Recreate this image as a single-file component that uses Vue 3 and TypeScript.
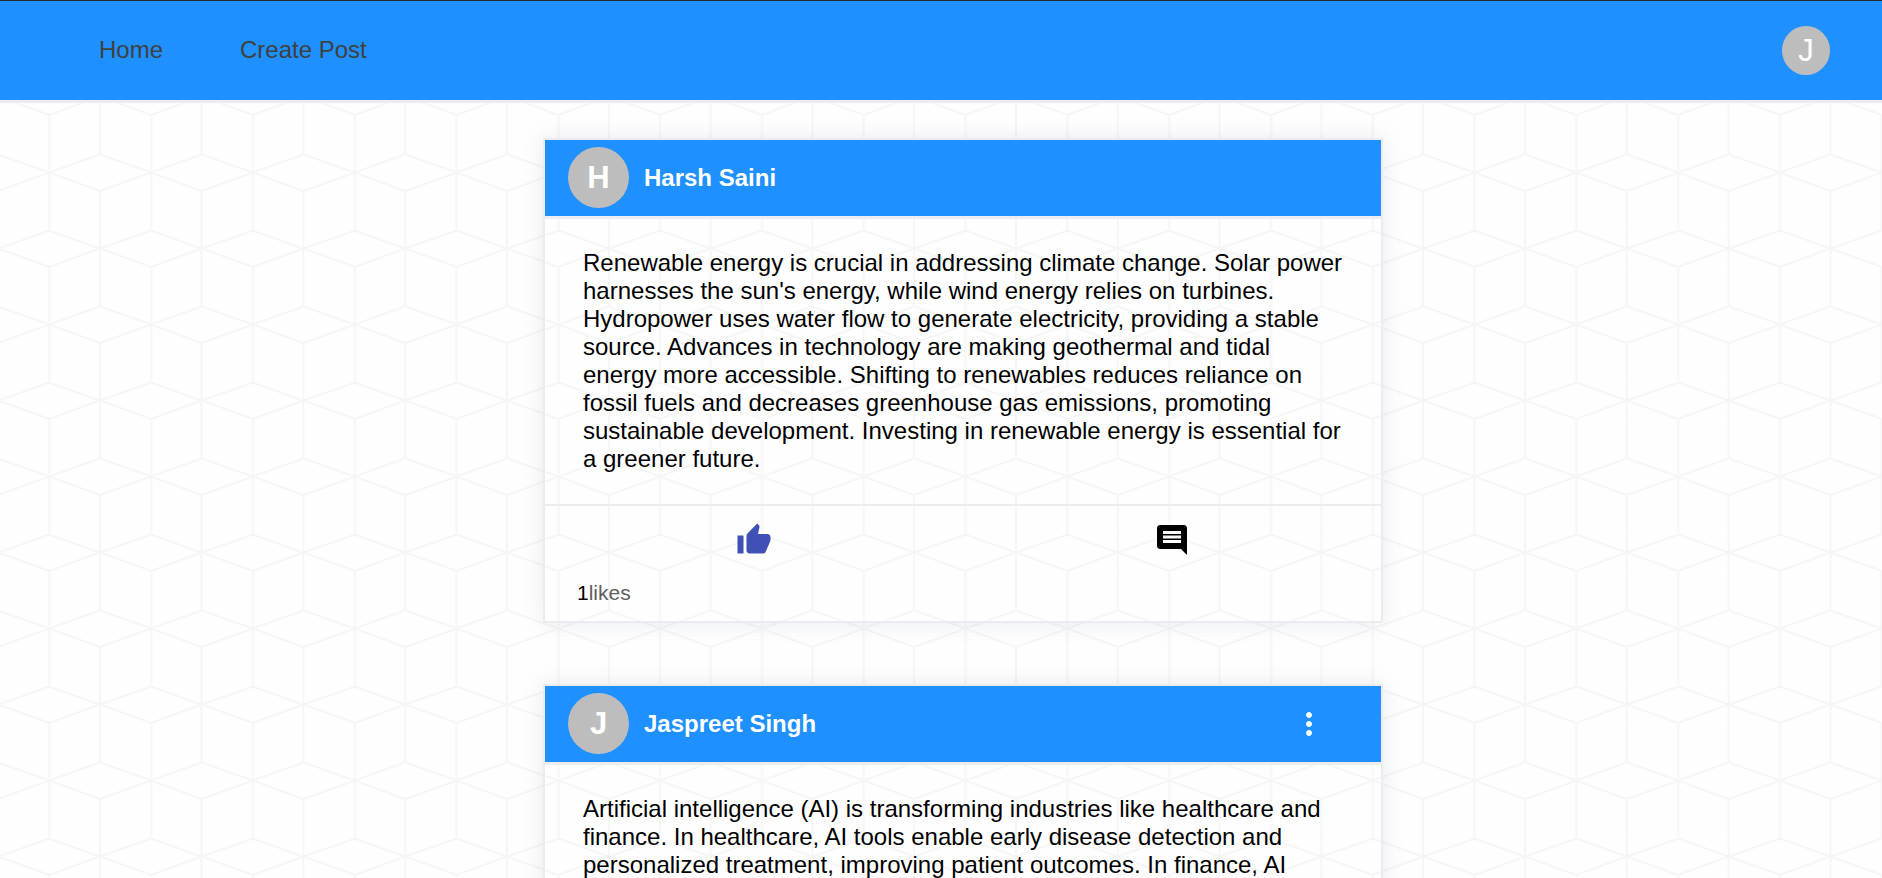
<script setup lang="ts">
interface Post {
  id: number
  author: string
  body: string
  likes: number
  liked: boolean
  own: boolean
}

const links: string[] = ['Home', 'Create Post']

const posts: Post[] = [
  {
    id: 1,
    author: 'Harsh Saini',
    body: "Renewable energy is crucial in addressing climate change. Solar power harnesses the sun's energy, while wind energy relies on turbines. Hydropower uses water flow to generate electricity, providing a stable source. Advances in technology are making geothermal and tidal energy more accessible. Shifting to renewables reduces reliance on fossil fuels and decreases greenhouse gas emissions, promoting sustainable development. Investing in renewable energy is essential for a greener future.",
    likes: 1,
    liked: true,
    own: false,
  },
  {
    id: 2,
    author: 'Jaspreet Singh',
    body: 'Artificial intelligence (AI) is transforming industries like healthcare and finance. In healthcare, AI tools enable early disease detection and personalized treatment, improving patient outcomes. In finance, AI',
    likes: 0,
    liked: false,
    own: true,
  },
]
</script>

<template>
  <div class="page">
    <header class="topbar">
      <nav class="links">
        <a v-for="link in links" :key="link" href="#">{{ link }}</a>
      </nav>
      <button class="avatar small" type="button" aria-label="Account">J</button>
    </header>

    <main class="feed">
      <article v-for="post in posts" :key="post.id" class="card">
        <header class="card-head">
          <span class="avatar">{{ post.author.charAt(0) }}</span>
          <h2>{{ post.author }}</h2>
          <button v-if="post.own" class="icon-btn more" type="button" aria-label="Post options">
            <svg viewBox="0 0 24 24" width="36" height="36" fill="currentColor">
              <path d="M12 8c1.100 0 2-.9 2-2s-.9-2-2-2-2 .9-2 2 .9 2 2 2zm0 2c-1.100 0-2 .9-2 2s.9 2 2 2 2-.9 2-2-.9-2-2-2zm0 6c-1.100 0-2 .9-2 2s.9 2 2 2 2-.9 2-2-.9-2-2-2z" />
            </svg>
          </button>
        </header>
        <p class="body">{{ post.body }}</p>
        <div class="actions">
          <button class="icon-btn" :class="{ liked: post.liked }" type="button" aria-label="Like">
            <svg viewBox="0 0 24 24" width="36" height="36" fill="currentColor">
              <path d="M1 21h4V9H1v12zm22-11c0-1.100-.9-2-2-2h-6.310l.95-4.570.03-.32c0-.41-.17-.79-.44-1.060L14.170 1 7.590 7.590C7.220 7.950 7 8.450 7 9v10c0 1.100.9 2 2 2h9c.83 0 1.540-.5 1.840-1.220l3.020-7.050c.09-.23.14-.47.14-.73v-2z" />
            </svg>
          </button>
          <button class="icon-btn" type="button" aria-label="Comment">
            <svg viewBox="0 0 24 24" width="36" height="36" fill="currentColor">
              <path d="M21.990 4c0-1.100-.89-2-1.990-2H4c-1.100 0-2 .9-2 2v12c0 1.100.9 2 2 2h14l4 4-.01-18zM18 14H6v-2h12v2zm0-3H6V9h12v2zm0-3H6V6h12v2z" />
            </svg>
          </button>
        </div>
        <p v-if="post.likes > 0" class="likes"><span>{{ post.likes }}</span>likes</p>
      </article>
    </main>
  </div>
</template>

<style>
html,
body {
  height: 100%;
  overflow: hidden;
}

body {
  margin: 0;
}
</style>

<style scoped>
.page {
  height: 100vh;
  overflow: hidden;
  font-family: 'Liberation Sans', Arial, sans-serif;
  background-color: #fefefe;
  background-image: url("data:image/svg+xml,%3Csvg xmlns='http://www.w3.org/2000/svg' width='509' height='152'%3E%3Cdefs%3E%3Cpattern id='p' width='101.8' height='152' patternUnits='userSpaceOnUse'%3E%3Cpath fill='none' stroke='%23f6f6f6' stroke-width='2' d='M0 20.500L51.400 38.500L101.800 20.500M0 57L51.400 38.500L101.800 57M0 114.500L51.400 96.500L101.800 114.500M0 114.500L51.400 133L101.800 114.500M0 0V20.500M0 57V152M101.800 0V20.500M101.800 57V152M51.400 0V96.500M51.400 133V152'/%3E%3C/pattern%3E%3C/defs%3E%3Crect width='509' height='152' fill='url(%23p)'/%3E%3C/svg%3E");
  background-position: -2px -18px;
}

.topbar {
  box-sizing: border-box;
  height: 103px;
  padding: 0 52px 0 99px;
  display: flex;
  align-items: center;
  justify-content: space-between;
  background: #1e90ff;
  border-top: 1px solid #24292e;
  border-bottom: 3px solid #ececf1;
}

.links {
  display: flex;
  gap: 77px;
  padding-bottom: 2px;
}

.links a {
  font-size: 24px;
  line-height: 28px;
  color: #404040;
  text-decoration: none;
}

.avatar {
  width: 61px;
  height: 61px;
  flex: none;
  display: flex;
  align-items: center;
  justify-content: center;
  padding: 0;
  border: 0;
  border-radius: 50%;
  background: #bdbdbd;
  color: #fff;
  font-family: 'Liberation Sans', Arial, sans-serif;
  font-size: 31px;
  line-height: 31px;
  font-weight: 700;
}

.avatar.small {
  width: 48px;
  height: 49px;
  font-weight: 400;
}

.feed {
  display: flex;
  flex-direction: column;
  align-items: center;
  gap: 61px;
  padding: 35px 0 0 44px;
}

.card {
  box-sizing: border-box;
  width: 840px;
  max-width: 100%;
  border: 2px solid #ebebf0;
  box-shadow: 0 0 20px rgba(100, 110, 150, 0.14);
}

.card-head {
  display: flex;
  align-items: center;
  height: 75px;
  padding: 0 54px 1px 23px;
  background: #1e90ff;
  border-bottom: 3px solid #ececf1;
  color: #fff;
}

.card-head h2 {
  flex: 1;
  margin: 0 0 0 15px;
  padding-top: 1px;
  font-size: 24px;
  line-height: 28px;
}

.body {
  margin: 0;
  padding: 30px 34px 31px 38px;
  font-size: 24px;
  line-height: 28px;
  color: #000;
}

.actions {
  display: flex;
  border-top: 2px solid #ebebf0;
}

.icon-btn {
  flex: 1;
  height: 68px;
  padding: 0;
  display: flex;
  align-items: center;
  justify-content: center;
  border: 0;
  background: none;
  color: #000;
}

.icon-btn.liked {
  color: #3f51b5;
}

.icon-btn.more {
  flex: none;
  width: 36px;
  color: #fff;
}

.likes {
  margin: 0;
  padding: 6px 32px 15px;
  font-size: 21px;
  line-height: 26px;
  color: #606060;
}

.likes span {
  color: #000;
}
</style>
